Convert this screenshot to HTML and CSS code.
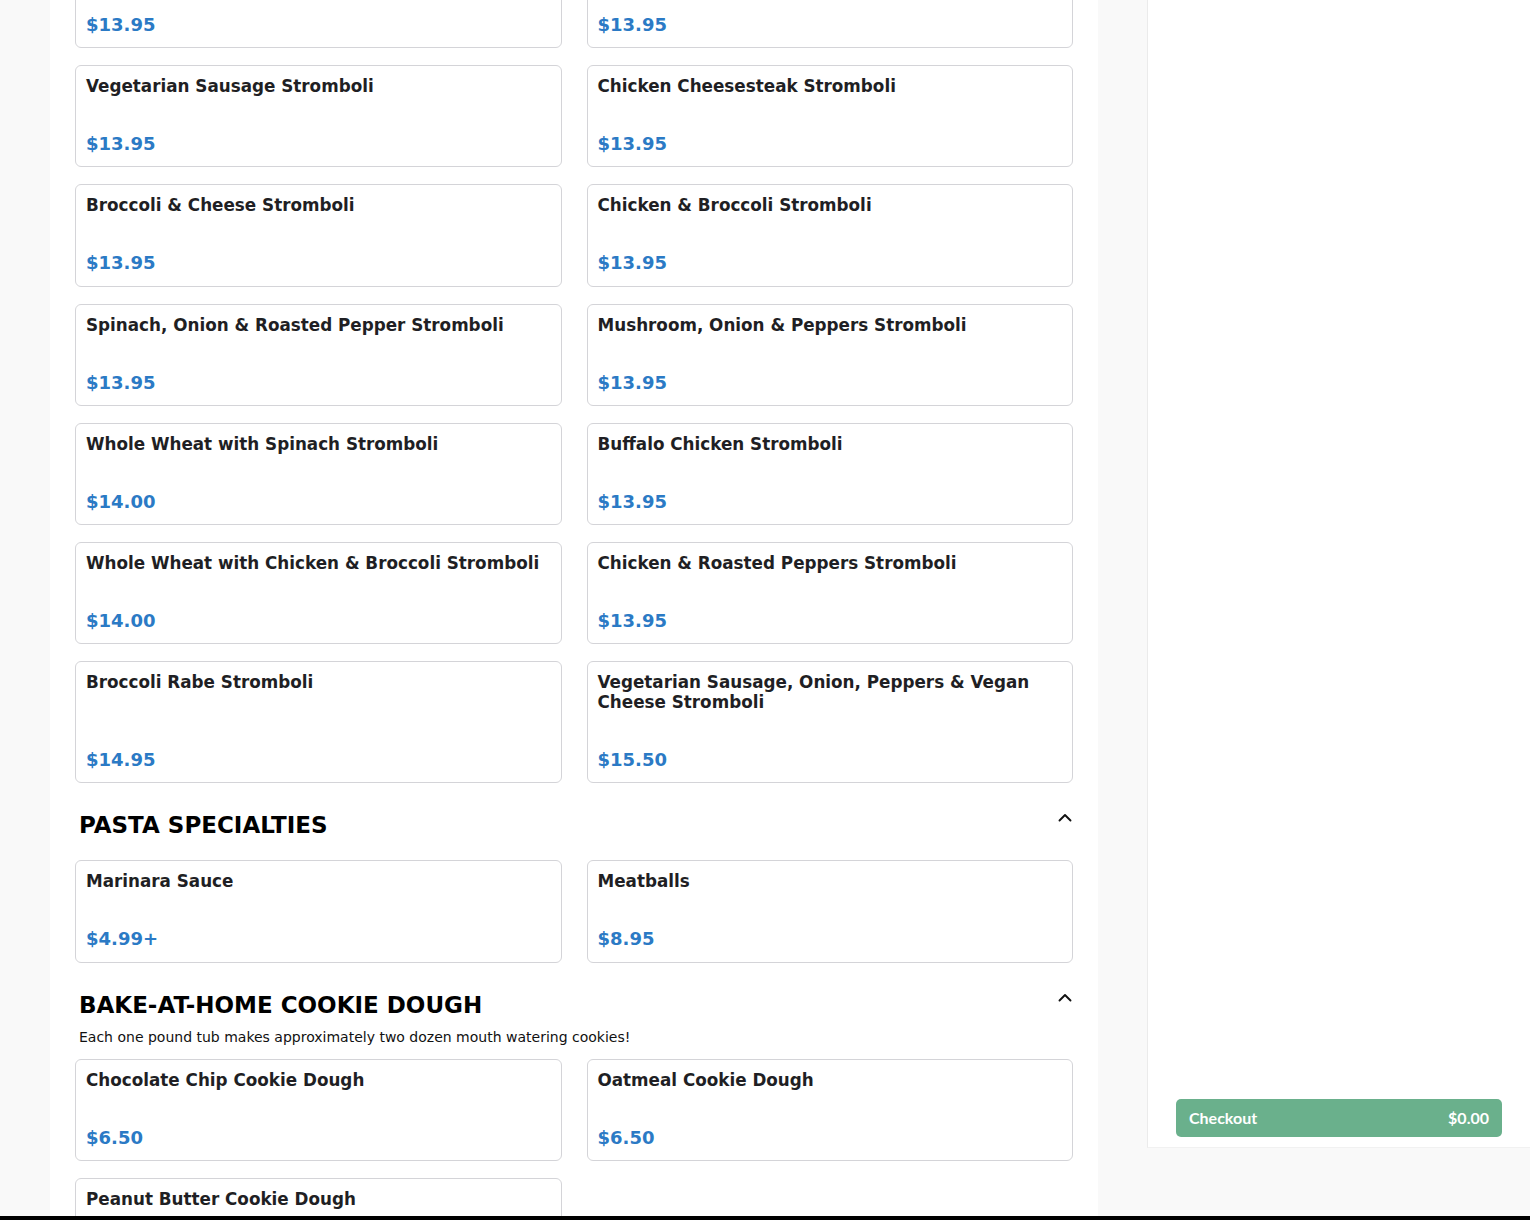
FILE: index.html
```html
<!DOCTYPE html>
<html lang="en">
<head>
<meta charset="utf-8">
<title>Menu</title>
<link rel="stylesheet" href="styles.css">
</head>
<body>
<div class="page">
  <main class="menu">
    <section class="section first">
      <div class="grid">
        <div class="card"><div class="title">Sausage Stromboli</div><div class="price">$13.95</div></div>
        <div class="card"><div class="title">Cheesesteak Stromboli</div><div class="price">$13.95</div></div>
        <div class="card"><div class="title">Vegetarian Sausage Stromboli</div><div class="price">$13.95</div></div>
        <div class="card"><div class="title">Chicken Cheesesteak Stromboli</div><div class="price">$13.95</div></div>
        <div class="card"><div class="title">Broccoli &amp; Cheese Stromboli</div><div class="price">$13.95</div></div>
        <div class="card"><div class="title">Chicken &amp; Broccoli Stromboli</div><div class="price">$13.95</div></div>
        <div class="card"><div class="title">Spinach, Onion &amp; Roasted Pepper Stromboli</div><div class="price">$13.95</div></div>
        <div class="card"><div class="title">Mushroom, Onion &amp; Peppers Stromboli</div><div class="price">$13.95</div></div>
        <div class="card"><div class="title">Whole Wheat with Spinach Stromboli</div><div class="price">$14.00</div></div>
        <div class="card"><div class="title">Buffalo Chicken Stromboli</div><div class="price">$13.95</div></div>
        <div class="card"><div class="title">Whole Wheat with Chicken &amp; Broccoli Stromboli</div><div class="price">$14.00</div></div>
        <div class="card"><div class="title">Chicken &amp; Roasted Peppers Stromboli</div><div class="price">$13.95</div></div>
        <div class="card"><div class="title">Broccoli Rabe Stromboli</div><div class="price">$14.95</div></div>
        <div class="card"><div class="title">Vegetarian Sausage, Onion, Peppers &amp; Vegan Cheese Stromboli</div><div class="price">$15.50</div></div>
      </div>
    </section>

    <section class="section">
      <div class="section-head">
        <h2>PASTA SPECIALTIES</h2>
        <svg class="chev" width="16" height="16" viewBox="0 0 16 16"><polyline points="2.5,10.5 8,5 13.5,10.5" fill="none" stroke="#111" stroke-width="1.9" stroke-linecap="round" stroke-linejoin="round"/></svg>
      </div>
      <div class="grid">
        <div class="card"><div class="title">Marinara Sauce</div><div class="price">$4.99+</div></div>
        <div class="card"><div class="title">Meatballs</div><div class="price">$8.95</div></div>
      </div>
    </section>

    <section class="section">
      <div class="section-head">
        <h2>BAKE-AT-HOME COOKIE DOUGH</h2>
        <svg class="chev" width="16" height="16" viewBox="0 0 16 16"><polyline points="2.5,10.5 8,5 13.5,10.5" fill="none" stroke="#111" stroke-width="1.9" stroke-linecap="round" stroke-linejoin="round"/></svg>
      </div>
      <p class="desc">Each one pound tub makes approximately two dozen mouth watering cookies!</p>
      <div class="grid">
        <div class="card"><div class="title">Chocolate Chip Cookie Dough</div><div class="price">$6.50</div></div>
        <div class="card"><div class="title">Oatmeal Cookie Dough</div><div class="price">$6.50</div></div>
        <div class="card"><div class="title">Peanut Butter Cookie Dough</div><div class="price">$6.50</div></div>
      </div>
    </section>
  </main>
</div>

<aside class="cart">
  <button class="checkout"><span>Checkout</span><span>$0.00</span></button>
</aside>
<div class="bottom-bar"></div>
</body>
</html>
```

FILE: styles.css
```css
* { box-sizing: border-box; }

html, body {
  margin: 0;
  padding: 0;
}

body {
  background: #f9f9f9;
  font-family: "DejaVu Sans", Verdana, sans-serif;
  color: #1f1f24;
  overflow: hidden;
  height: 1220px;
}

.page {
  display: flex;
}

.menu {
  width: 1048px;
  margin-left: 50px;
  background: #ffffff;
  padding: 0 25px 40px;
}

.section {
  padding-top: 29px;
}

.section.first {
  padding-top: 0;
  margin-top: -54px;
}

.section-head {
  display: flex;
  align-items: center;
  justify-content: space-between;
  padding-left: 4px;
  margin-bottom: 22px;
}

.section-head h2 {
  margin: 0;
  font-size: 23px;
  line-height: 26px;
  font-weight: bold;
  color: #000;
}

.chev {
  margin-top: -14px;
}

.desc {
  margin: -13px 0 12px;
  padding-left: 4px;
  font-size: 14px;
  line-height: 20px;
  color: #111;
}

.grid {
  display: grid;
  grid-template-columns: 1fr 1fr;
  column-gap: 25px;
  row-gap: 17px;
}

.card {
  border: 1px solid #d4d4d8;
  border-radius: 6px;
  padding: 10px 10px 10px;
  background: #fff;
  display: flex;
  flex-direction: column;
}

.title {
  font-size: 16.8px;
  line-height: 20px;
  font-weight: bold;
  color: #1f1f24;
  margin-bottom: 36px;
}

.price {
  font-size: 18px;
  line-height: 24.2px;
  font-weight: bold;
  color: #2b7ac5;
  margin-top: auto;
}

.cart {
  position: fixed;
  top: 0;
  right: 0;
  width: 383px;
  height: 1148px;
  background: #fff;
  border-left: 1px solid #ebebeb;
  border-bottom: 1px solid #f1f1f1;
  display: flex;
  flex-direction: column;
  justify-content: flex-end;
  padding: 0 28px 10px 28px;
}

.checkout {
  display: flex;
  justify-content: space-between;
  align-items: center;
  width: 100%;
  height: 38px;
  border: none;
  border-radius: 5px;
  background: #6ab08c;
  color: #fff;
  font-family: Lato, "Open Sans", sans-serif;
  font-weight: bold;
  font-size: 16px;
  padding: 0 13px 2px;
}

.bottom-bar {
  position: fixed;
  left: 0;
  right: 0;
  bottom: 0;
  height: 4px;
  background: #000;
}
```
